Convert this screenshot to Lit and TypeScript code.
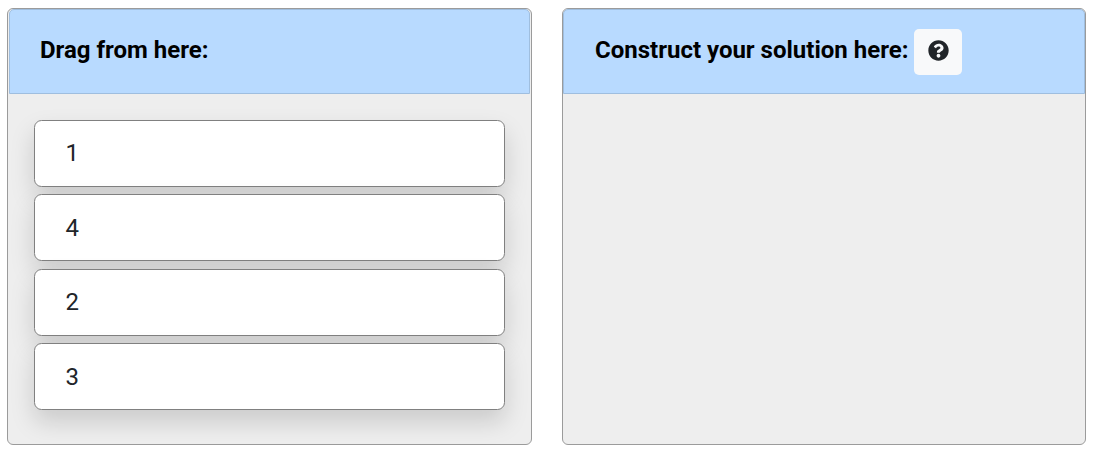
import { LitElement, html, css } from "lit";
import { customElement, property } from "lit/decorators.js";

@customElement("app-root")
export class AppRoot extends LitElement {
  @property({ type: Array }) blocks: string[] = ["1", "4", "2", "3"];

  static styles = css`
    :host {
      display: block;
      font-family: Roboto, sans-serif;
      font-size: 24px;
      line-height: 36px;
      color: #212529;
    }
    * {
      box-sizing: border-box;
    }
    .board {
      display: flex;
      justify-content: space-between;
      height: 454px;
      padding: 8px 9px 9px 7px;
      background: #fff;
    }
    .panel {
      width: 525px;
      border: 1px solid #9b9b9b;
      border-radius: 6px;
      background: #eee;
    }
    .source {
      padding: 0 1px;
    }
    .target {
      width: 524px;
    }
    .head {
      display: flex;
      align-items: center;
      gap: 6px;
      height: 85px;
      padding: 0 30px;
      border: 1px solid #9fbedf;
      border-radius: 5px 5px 0 0;
      background: #b8daff;
      color: #000;
      font-weight: 700;
      white-space: nowrap;
    }
    .title {
      padding-bottom: 4px;
    }
    .target .head {
      padding-left: 31px;
    }
    .list {
      display: flex;
      flex-direction: column;
      gap: 7.45px;
      padding: 26px 25px 0 25px;
    }
    .item {
      height: 67px;
      padding: 14.3px 30.5px 0;
      border: 1px solid #808080;
      border-radius: 7.5px;
      background: #fff;
      box-shadow: 0 12px 24px rgba(0, 0, 0, 0.15);
    }
    .help {
      display: flex;
      align-items: center;
      justify-content: center;
      width: 48px;
      height: 46px;
      margin-top: 1px;
      padding: 0 0 3px 1px;
      border: 0;
      border-radius: 5px;
      background: #f8f9fa;
      color: #212529;
    }
    .icon {
      width: 21px;
      height: 21px;
      fill: currentColor;
    }
  `;

  render() {
    return html`
      <div class="board">
        <section class="panel source">
          <div class="head"><span class="title">Drag from here:</span></div>
          <div class="list">
            ${this.blocks.map((b) => html`<div class="item">${b}</div>`)}
          </div>
        </section>
        <section class="panel target">
          <div class="head">
            <span class="title">Construct your solution here:</span>
            <button class="help" aria-label="Help">
              <svg class="icon" viewBox="0 0 512 512">
                <path d="M504 256c0 136.997-111.043 248-248 248S8 392.997 8 256C8 119.083 119.043 8 256 8s248 111.083 248 248zM262.655 90c-54.497 0-89.255 22.957-116.549 63.758-3.536 5.286-2.353 12.415 2.715 16.258l34.699 26.31c5.205 3.947 12.621 3.008 16.665-2.122 17.864-22.658 30.113-35.797 57.303-35.797 20.429 0 45.698 13.148 45.698 32.958 0 14.976-12.363 22.667-32.534 33.976C247.128 238.528 216 254.941 216 296v4c0 6.627 5.373 12 12 12h56c6.627 0 12-5.373 12-12v-1.333c0-28.462 83.186-29.647 83.186-106.667 0-58.002-60.165-102-116.531-102zM256 338c-25.365 0-46 20.635-46 46 0 25.364 20.635 46 46 46s46-20.636 46-46c0-25.364-20.635-46-46-46z"></path>
              </svg>
            </button>
          </div>
        </section>
      </div>
    `;
  }
}
